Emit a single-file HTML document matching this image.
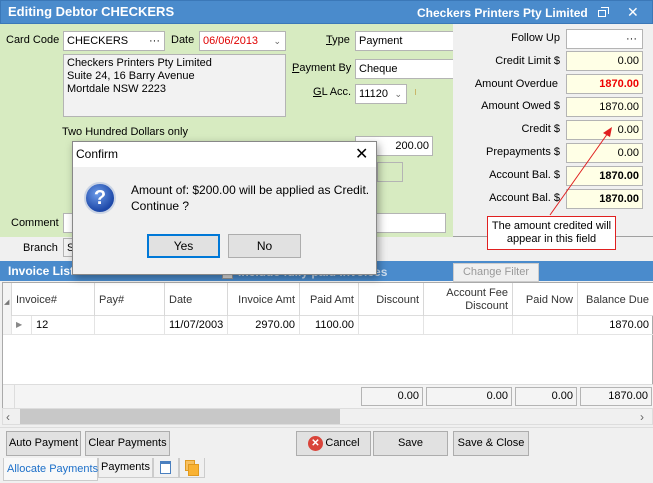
<!DOCTYPE html>
<html><head><meta charset="utf-8"><style>
*{box-sizing:border-box;margin:0;padding:0}
body{width:653px;height:483px;overflow:hidden;font-family:"Liberation Sans",sans-serif;font-size:11px;color:#000;background:#f0f0f0;position:relative}
.a{position:absolute}
.inp{position:absolute;background:#fff;border:1px solid #b4b4b4;height:20px;padding:0 3px;line-height:18px;white-space:nowrap}
.y{background:#ffffe6;text-align:right}
.lbl{position:absolute;white-space:nowrap}
.r{text-align:right}
.btn{position:absolute;background:#e1e1e1;border:1px solid #adadad;text-align:center;line-height:23px;white-space:nowrap}
.th{position:absolute;top:0;height:33px;border-right:1px solid #d8d8d8;padding:0 4px;display:flex;align-items:center;color:#333;white-space:nowrap}
.td{position:absolute;top:0;height:18px;border-right:1px solid #e4e4e4;padding:0 4px;line-height:18px}
</style></head><body>
<!-- title bar -->
<div class="a" style="left:0;top:0;width:653px;height:24px;background:#4a8bcc;border:1px solid #3b78b8"></div>
<div class="lbl" style="left:8px;top:4px;color:#fff;font-weight:bold;font-size:13px">Editing Debtor CHECKERS</div>
<div class="lbl" style="left:417px;top:6px;color:#fff;font-weight:bold;font-size:12px">Checkers Printers Pty Limited</div>
<div class="a" style="left:598px;top:10px;width:8px;height:7px;border:1.5px solid #fff"></div>
<div class="a" style="left:601px;top:7px;width:8px;height:7px;border-top:1.5px solid #fff;border-right:1.5px solid #fff"></div>
<div class="lbl" style="left:627px;top:4px;color:#fff;font-size:14px">✕</div>

<!-- green area -->
<div class="a" style="left:0;top:24px;width:453px;height:213px;background:#d7ebc1"></div>
<div class="lbl" style="left:6px;top:34px">Card Code</div>
<div class="inp" style="left:63px;top:31px;width:102px">CHECKERS<span style="position:absolute;right:4px;top:0">···</span></div>
<div class="lbl" style="left:171px;top:34px">Date</div>
<div class="inp" style="left:199px;top:31px;width:87px;color:#e00000">06/06/2013<span style="position:absolute;right:4px;top:0;color:#666;font-size:9px">&#8964;</span></div>
<div class="inp" style="left:63px;top:54px;width:223px;height:63px;background:#f2f2f2;line-height:13px;white-space:normal;padding-top:2px">Checkers Printers Pty Limited<br>Suite 24, 16 Barry Avenue<br>Mortdale NSW 2223</div>
<div class="lbl" style="left:326px;top:34px"><u>T</u>ype</div>
<div class="inp" style="left:355px;top:31px;width:100px;border-right:none">Payment</div>
<div class="lbl" style="left:292px;top:62px"><u>P</u>ayment By</div>
<div class="inp" style="left:355px;top:59px;width:100px;border-right:none">Cheque</div>
<div class="lbl" style="left:313px;top:86px"><u>G</u>L Acc.</div>
<div class="inp" style="left:355px;top:84px;width:52px">11120<span style="position:absolute;right:4px;top:0;color:#666;font-size:9px">&#8964;</span></div>
<div class="a" style="left:415px;top:89px;width:1px;height:6px;background:#c9b66a"></div>
<div class="lbl" style="left:62px;top:126px">Two Hundred Dollars only</div>
<div class="inp y" style="left:355px;top:136px;width:78px;background:#fff">200.00</div>
<div class="inp" style="left:377px;top:162px;width:26px;background:#d7ebc1"></div>
<div class="lbl" style="left:11px;top:217px">Comment</div>
<div class="inp" style="left:63px;top:213px;width:383px"></div>

<!-- right panel -->
<div class="a" style="left:453px;top:24px;width:200px;height:213px;background:#f0f0f0;border-bottom:1px solid #a0a0a0"></div>
<div class="lbl r" style="left:455px;top:32px;width:105px">Follow Up</div>
<div class="inp" style="left:566px;top:29px;width:77px"><span style="position:absolute;right:5px;top:0">···</span></div>
<div class="lbl r" style="left:455px;top:55px;width:105px">Credit Limit $</div>
<div class="inp y" style="left:566px;top:51px;width:77px">0.00</div>
<div class="lbl r" style="left:455px;top:78px;width:103px">Amount Overdue</div>
<div class="inp y" style="left:566px;top:74px;width:77px;color:#ee0000;font-weight:bold">1870.00</div>
<div class="lbl r" style="left:455px;top:100px;width:105px">Amount Owed $</div>
<div class="inp y" style="left:566px;top:97px;width:77px">1870.00</div>
<div class="lbl r" style="left:455px;top:123px;width:105px">Credit $</div>
<div class="inp y" style="left:566px;top:120px;width:77px">0.00</div>
<div class="lbl r" style="left:455px;top:146px;width:105px">Prepayments $</div>
<div class="inp y" style="left:566px;top:143px;width:77px">0.00</div>
<div class="lbl r" style="left:455px;top:169px;width:105px">Account Bal. $</div>
<div class="inp y" style="left:566px;top:166px;width:77px;font-weight:bold">1870.00</div>
<div class="lbl r" style="left:455px;top:192px;width:105px">Account Bal. $</div>
<div class="inp y" style="left:566px;top:189px;width:77px;font-weight:bold">1870.00</div>

<!-- branch row -->
<div class="lbl" style="left:23px;top:242px">Branch</div>
<div class="inp" style="left:63px;top:238px;width:20px;height:19px;background:#f2f2f2">S</div>

<!-- invoice list bar -->
<div class="a" style="left:0;top:261px;width:653px;height:20px;background:#4a8bcc"></div>
<div class="lbl" style="left:8px;top:264px;color:#fff;font-weight:bold;font-size:12px">Invoice List</div>
<div class="a" style="left:222px;top:268px;width:11px;height:11px;background:#ddd;border:1px solid #999"></div>
<div class="lbl" style="left:238px;top:265px;color:#cfe0f2;font-weight:bold;font-size:12px">Include fully paid invoices</div>
<div class="a" style="left:453px;top:263px;width:86px;height:19px;background:#f0f0f0;border:1px solid #ccc;color:#999;text-align:center;line-height:17px">Change Filter</div>

<!-- grid -->
<div class="a" style="left:2px;top:282px;width:651px;height:126px;background:#fff;border:1px solid #aaa"></div>
<div class="a" style="left:3px;top:283px;width:650px;height:33px;background:#fff;border-bottom:1px solid #ddd">
 <div class="th" style="left:0;width:9px;background:#f4f4f4;font-size:7px;color:#777;align-items:flex-end;padding:0 0 10px 1px">◢</div>
 <div class="th" style="left:9px;width:83px">Invoice#</div>
 <div class="th" style="left:92px;width:70px">Pay#</div>
 <div class="th" style="left:162px;width:63px">Date</div>
 <div class="th" style="left:225px;width:72px;justify-content:flex-end">Invoice Amt</div>
 <div class="th" style="left:297px;width:59px;justify-content:flex-end">Paid Amt</div>
 <div class="th" style="left:356px;width:65px;justify-content:flex-end">Discount</div>
 <div class="th" style="left:421px;width:89px;justify-content:flex-end;text-align:right;line-height:13px">Account Fee<br>Discount</div>
 <div class="th" style="left:510px;width:65px;justify-content:flex-end">Paid Now</div>
 <div class="th" style="left:575px;width:75px;justify-content:flex-end;border-right:none">Balance Due</div>
</div>
<div class="a" style="left:3px;top:316px;width:650px;height:19px;border-bottom:1px solid #e4e4e4">
 <div class="td" style="left:0;width:9px;height:18px;background:#f4f4f4"></div>
 <div class="td" style="left:9px;width:20px;color:#888;font-size:8px">▶</div>
 <div class="td" style="left:29px;width:63px">12</div>
 <div class="td" style="left:92px;width:70px"></div>
 <div class="td" style="left:162px;width:63px">11/07/2003</div>
 <div class="td r" style="left:225px;width:72px">2970.00</div>
 <div class="td r" style="left:297px;width:59px">1100.00</div>
 <div class="td" style="left:356px;width:65px"></div>
 <div class="td" style="left:421px;width:89px"></div>
 <div class="td" style="left:510px;width:65px"></div>
 <div class="td r" style="left:575px;width:75px;border-right:none">1870.00</div>
</div>
<div class="a" style="left:3px;top:384px;width:650px;height:24px;background:#f4f4f4;border-top:1px solid #ddd"></div>
<div class="a" style="left:3px;top:384px;width:12px;height:24px;border-right:1px solid #ddd"></div>
<div class="inp r" style="left:361px;top:387px;width:62px;background:#f4f4f4;height:19px;line-height:17px">0.00</div>
<div class="inp r" style="left:426px;top:387px;width:86px;background:#f4f4f4;height:19px;line-height:17px">0.00</div>
<div class="inp r" style="left:515px;top:387px;width:62px;background:#f4f4f4;height:19px;line-height:17px">0.00</div>
<div class="inp r" style="left:580px;top:387px;width:72px;background:#f4f4f4;height:19px;line-height:17px">1870.00</div>
<!-- scrollbar -->
<div class="a" style="left:2px;top:408px;width:651px;height:17px;background:#f0f0f0;border:1px solid #ddd"></div>
<div class="a" style="left:20px;top:409px;width:320px;height:15px;background:#c8c8c8"></div>
<div class="lbl" style="left:6px;top:410px;color:#666;font-size:12px">‹</div>
<div class="lbl" style="left:640px;top:410px;color:#666;font-size:12px">›</div>
<div class="a" style="left:0;top:427px;width:653px;height:1px;background:#ddd"></div>

<!-- buttons -->
<div class="btn" style="left:6px;top:431px;width:75px;height:25px">Auto Payment</div>
<div class="btn" style="left:85px;top:431px;width:85px;height:25px">Clear Payments</div>
<div class="btn" style="left:296px;top:431px;width:75px;height:25px;padding-left:18px">Cancel</div>
<div class="a" style="left:308px;top:436px;width:15px;height:15px;border-radius:50%;background:#d9443a;color:#fff;font-size:10px;font-weight:bold;text-align:center;line-height:15px">✕</div>
<div class="btn" style="left:373px;top:431px;width:75px;height:25px">Save</div>
<div class="btn" style="left:453px;top:431px;width:76px;height:25px">Save &amp; Close</div>

<!-- tabs -->
<div class="a" style="left:0;top:457px;width:653px;height:26px;background:#f0f0f0"></div>
<div class="a" style="left:3px;top:458px;width:95px;height:23px;background:#f8f8f8;border:1px solid #ccc;border-top:none;color:#1c6fc9;line-height:22px;padding-left:3px;white-space:nowrap">Allocate Payments</div>
<div class="a" style="left:98px;top:458px;width:55px;height:20px;border:1px solid #ccc;border-top:none;line-height:19px;text-align:center;white-space:nowrap">Payments</div>
<div class="a" style="left:153px;top:458px;width:26px;height:20px;border:1px solid #ccc;border-top:none"></div>
<div class="a" style="left:160px;top:461px;width:11px;height:13px;background:#fff;border:1px solid #4a7fbf;border-top:3px solid #4a7fbf"></div>
<div class="a" style="left:179px;top:458px;width:26px;height:20px;border:1px solid #ccc;border-top:none"></div>
<div class="a" style="left:185px;top:460px;width:10px;height:11px;background:#f7c060;border:1px solid #e09a20"></div>
<div class="a" style="left:188px;top:464px;width:11px;height:12px;background:#f9b233;border:1px solid #e09a20"></div>

<!-- callout -->
<div class="a" style="left:487px;top:216px;width:129px;height:34px;background:#fff;border:1px solid #e02020;text-align:center;font-size:11px;line-height:13px;padding-top:3px">The amount credited will appear in this field</div>
<svg class="a" style="left:0;top:0" width="653" height="483"><line x1="550" y1="215" x2="608" y2="133" stroke="#e02020" stroke-width="1"/><polygon points="612,127 603,133 610,137" fill="#e02020"/></svg>

<!-- dialog -->
<div class="a" style="left:72px;top:141px;width:305px;height:134px;background:#f0f0f0;border:1px solid #888;box-shadow:2px 3px 8px rgba(0,0,0,.35)"></div>
<div class="a" style="left:73px;top:142px;width:303px;height:25px;background:#fff"></div>
<div class="lbl" style="left:76px;top:147px;font-size:12px">Confirm</div>
<div class="lbl" style="left:355px;top:144px;font-size:16px;font-weight:300">✕</div>
<div class="a" style="left:84px;top:182px;width:32px;height:32px;border-radius:50%;background:radial-gradient(circle at 40% 35%,#6c9be8,#1d48a8 70%);border:2px solid #c9d3e4;color:#fff;font-weight:bold;font-size:20px;text-align:center;line-height:28px">?</div>
<div class="lbl" style="left:131px;top:182px;font-size:12px;line-height:16px">Amount of: $200.00 will be applied as Credit.<br>Continue ?</div>
<div class="a" style="left:147px;top:234px;width:73px;height:24px;background:#e1e1e1;border:2px solid #0078d7;text-align:center;line-height:20px;font-size:12px">Yes</div>
<div class="a" style="left:228px;top:234px;width:73px;height:24px;background:#e1e1e1;border:1px solid #adadad;text-align:center;line-height:22px;font-size:12px">No</div>
</body></html>
